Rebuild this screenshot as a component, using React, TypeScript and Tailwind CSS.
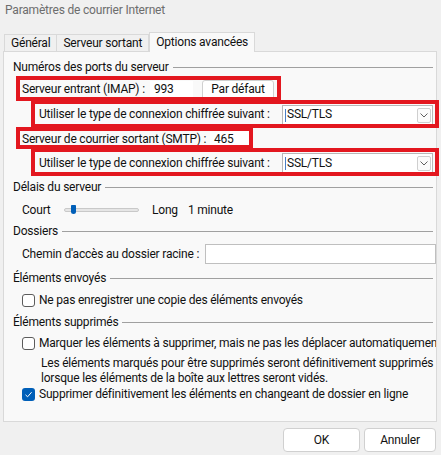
import React from 'react'

function GroupHeader({ label }: { label: string }) {
  return (
    <div className="flex items-center gap-1 pr-[3px]">
      <span>{label}</span>
      <div className="h-px flex-1 bg-[#a0a0a0]" />
    </div>
  )
}

function Checkbox({ checked = false }: { checked?: boolean }) {
  if (checked) {
    return (
      <span className="flex h-[13px] w-[13px] shrink-0 items-center justify-center rounded-[3px] bg-[#005fb8]">
        <svg width="9" height="9" viewBox="0 0 9 9" fill="none">
          <path d="M1.5 4.8 L3.6 6.8 L7.6 2.2" stroke="#fff" strokeWidth="1" />
        </svg>
      </span>
    )
  }
  return <span className="h-[13px] w-[13px] shrink-0 rounded-[3px] border border-[#5c5c5c] bg-white" />
}

function Select({ value, caret = false }: { value: string; caret?: boolean }) {
  return (
    <div className="relative flex h-[20px] flex-1 items-center border border-[#b7b7b7] bg-white pl-[4px]">
      {caret && <span className="absolute left-[2px] top-[3px] h-[13px] w-px bg-[#4a7fc4]" />}
      <span>{value}</span>
      <span className="absolute right-[1px] top-[2px] flex h-[15px] w-[14px] items-center justify-center rounded-[2px] border border-[#cfcfcf] bg-[#fbfbfb]">
        <svg width="8" height="5" viewBox="0 0 8 5" fill="none">
          <path d="M0.5 0.5 L4 4 L7.5 0.5" stroke="#606060" strokeWidth="1" />
        </svg>
      </span>
    </div>
  )
}

export default function App() {
  return (
    <div
      className="relative h-[455px] w-[441px] overflow-hidden whitespace-nowrap bg-[#f0f0f0] text-[12px] leading-[15px] tracking-[-0.2px] text-[#111]"
      style={{ fontFamily: 'Roboto, "Noto Sans", sans-serif' }}
    >
      {/* title */}
      <div className="h-[32px] pl-[5px] pt-[3px] text-[#6d6d6d]">Paramètres de courrier Internet</div>

      {/* tabs */}
      <div className="relative z-10 flex h-[19px] items-end pl-[4px]">
        <div className="flex h-[17px] items-center border border-b-0 border-[#d9d9d9] bg-[#f0f0f0] px-[6px]">Général</div>
        <div className="flex h-[17px] items-center border border-b-0 border-l-0 border-[#d9d9d9] bg-[#f0f0f0] px-[6px]">
          Serveur sortant
        </div>
        <div className="-mb-px flex h-[20px] items-center border border-b-0 border-[#d9d9d9] bg-[#f9f9f9] px-[6px]">
          Options avancées
        </div>
      </div>

      {/* panel */}
      <div className="mx-[3px] flex h-[371px] w-[434px] flex-col overflow-hidden border border-[#d9d9d9] bg-[#f9f9f9] pl-[9px] pt-[5px]">
        <div className="flex h-[20px] items-center">
          <div className="flex-1">
            <GroupHeader label="Numéros des ports du serveur" />
          </div>
        </div>

        <div className="flex h-[25px] items-center pl-[9px]">
          <span className="w-[128px]">Serveur entrant (IMAP) :</span>
          <div className="flex h-[18px] w-[43px] items-center border-b border-[#e0e0e0] bg-white pl-[4px]">993</div>
          <button className="ml-[9px] flex h-[20px] w-[72px] items-center justify-center rounded-[3px] border border-[#d0d0d0] bg-white">
            Par défaut
          </button>
        </div>

        <div className="flex h-[25px] items-center pl-[26px] pr-[3px]">
          <span className="w-[243px]">Utiliser le type de connexion chiffrée suivant :</span>
          <Select value="SSL/TLS" caret />
        </div>

        <div className="flex h-[24px] items-center pl-[9px]">
          <span className="w-[188px]">Serveur de courrier sortant (SMTP) :</span>
          <div className="flex h-[17px] w-[40px] items-center bg-white pl-[4px]">465</div>
        </div>

        <div className="flex h-[24px] items-center pl-[26px] pr-[3px]">
          <span className="w-[243px]">Utiliser le type de connexion chiffrée suivant :</span>
          <Select value="SSL/TLS" caret />
        </div>

        <div className="flex h-[24px] items-center">
          <div className="flex-1">
            <GroupHeader label="Délais du serveur" />
          </div>
        </div>

        <div className="flex h-[22px] items-center pl-[9px]">
          <span className="w-[42px]">Court</span>
          <div className="relative h-[4px] w-[75px] rounded-[2px] border border-[#c9c9c9] bg-[#e6e6e6]">
            <span className="absolute left-[6px] top-[-4px] h-[9px] w-[5px] rounded-b-[3px] rounded-t-[1px] bg-[#005fb8]" />
          </div>
          <span className="ml-[13px]">Long</span>
          <span className="ml-[10px]">1 minute</span>
        </div>

        <div className="flex h-[21px] items-center">
          <div className="flex-1">
            <GroupHeader label="Dossiers" />
          </div>
        </div>

        <div className="flex h-[24px] items-center pl-[9px]">
          <span className="w-[183px]">Chemin d'accès au dossier racine :</span>
          <div className="h-[20px] flex-1 border border-[#bfbfbf] bg-white" />
        </div>

        <div className="flex h-[24px] items-center">
          <div className="flex-1">
            <GroupHeader label="Éléments envoyés" />
          </div>
        </div>

        <div className="flex h-[20px] items-center gap-[4px] pl-[9px]">
          <Checkbox />
          <span>Ne pas enregistrer une copie des éléments envoyés</span>
        </div>

        <div className="flex h-[24px] items-center">
          <div className="flex-1">
            <GroupHeader label="Éléments supprimés" />
          </div>
        </div>

        <div className="flex h-[19px] items-center gap-[4px] pl-[9px]">
          <Checkbox />
          <span>Marquer les éléments à supprimer, mais ne pas les déplacer automatiquement</span>
        </div>

        <div className="mt-[3px] pl-[28px] leading-[15px]">
          <div>Les éléments marqués pour être supprimés seront définitivement supprimés</div>
          <div>lorsque les éléments de la boîte aux lettres seront vidés.</div>
        </div>

        <div className="flex h-[16px] items-center gap-[4px] pl-[9px]">
          <Checkbox checked />
          <span>Supprimer définitivement les éléments en changeant de dossier en ligne</span>
        </div>
      </div>

      {/* buttons */}
      <div className="mt-[6px] flex justify-end gap-[4px] pr-[5px]">
        <button className="h-[24px] w-[77px] rounded-[4px] border border-[#d0d0d0] bg-white">OK</button>
        <button className="h-[24px] w-[72px] rounded-[4px] border border-[#d0d0d0] bg-white">Annuler</button>
      </div>

      {/* red annotation boxes */}
      <div className="pointer-events-none absolute left-[16px] top-[76px] h-[25px] w-[265px] border-[4px] border-[#e3171f]" />
      <div className="pointer-events-none absolute left-[31px] top-[100px] h-[28px] w-[408px] border-[4px] border-[#e3171f]" />
      <div className="pointer-events-none absolute left-[16px] top-[127px] h-[22px] w-[237px] border-[4px] border-[#e3171f]" />
      <div className="pointer-events-none absolute left-[31px] top-[148px] h-[28px] w-[408px] border-[4px] border-[#e3171f]" />
    </div>
  )
}
